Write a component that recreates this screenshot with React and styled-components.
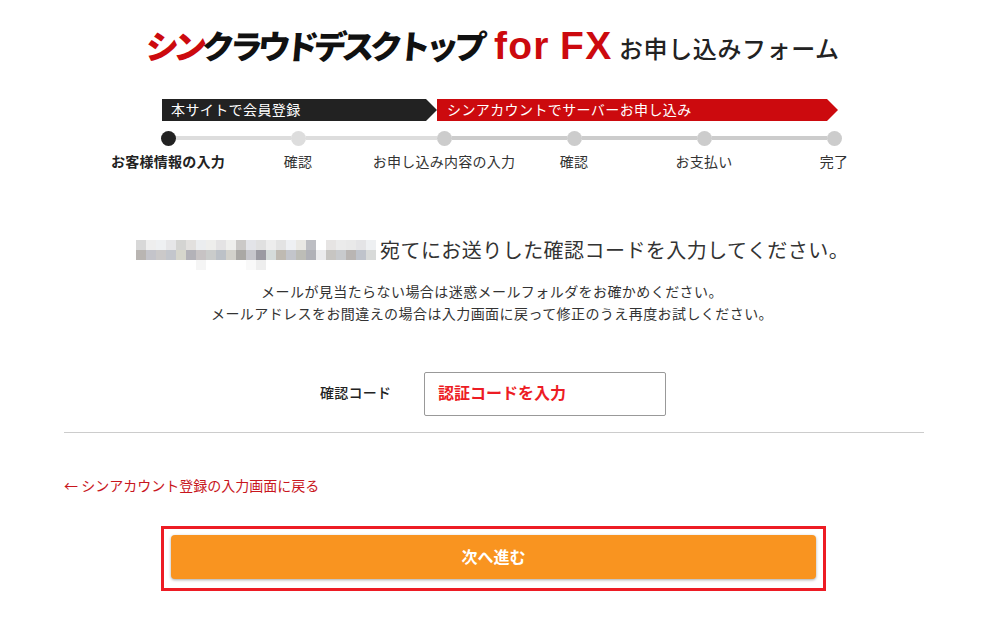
import React from "react";
import styled, { createGlobalStyle } from "styled-components";

const GlobalStyle = createGlobalStyle`
	html, body {
		margin: 0;
		padding: 0;
		background: #fff;
	}
	body {
		font-family: "Noto Sans CJK JP", "Noto Sans", sans-serif;
		color: #333;
		font-size: 14px;
		letter-spacing: 0.25px;
	}
`;

const Page = styled.div`
	width: 860px;
	margin-left: 64px;
	height: 622px;
	overflow: hidden;
`;

const Logo = styled.h1`
	display: flex;
	align-items: center;
	height: 40px;
	margin: 25px 0 0 82px;
	font-weight: 400;
	white-space: nowrap;
	letter-spacing: 0;
`;

const LogoName = styled.span`
	font-size: 33px;
	font-weight: 900;
	letter-spacing: -5px;
	color: #111;
	transform: skewX(-5deg);
	width: 348px;
	line-height: 40px;
`;

const LogoRed = styled.span`
	color: #cc0a0e;
`;

const LogoFx = styled.span`
	font-family: "Liberation Sans", Arial, sans-serif;
	font-size: 39px;
	font-weight: 700;
	letter-spacing: 1.2px;
	word-spacing: -1.5px;
	color: #cc0a0e;
	width: 126px;
	line-height: 40px;
	margin-top: 2px;
`;

const LogoSub = styled.span`
	font-size: 24px;
	font-weight: 500;
	letter-spacing: 0.6px;
	color: #222;
	line-height: 40px;
	margin: 5px 0 0 -1px;
`;

const Banners = styled.div`
	display: flex;
	margin: 34px 0 0 98px;
`;

const Banner = styled.div`
	box-sizing: border-box;
	width: ${(p) => p.$width}px;
	height: 22px;
	padding-left: ${(p) => p.$inset}px;
	background: ${(p) => p.$color};
	color: #fff;
	font-size: 14px;
	letter-spacing: 0.4px;
	line-height: 20px;
	clip-path: polygon(0 0, calc(100% - 11px) 0, 100% 50%, calc(100% - 11px) 100%, 0 100%);
`;

const Track = styled.div`
	display: flex;
	margin: 9.5px 0 0 96.5px;
`;

const Step = styled.div`
	display: flex;
	flex-direction: column;
	align-items: center;
	width: 15px;
`;

const Dot = styled.span`
	width: 15px;
	height: 15px;
	border-radius: 50%;
	background: ${(p) => p.$color};
`;

const StepLabel = styled.span`
	margin-top: 5px;
	line-height: 20px;
	white-space: nowrap;
	font-weight: ${(p) => (p.$active ? 700 : 400)};
	color: ${(p) => (p.$active ? "#222" : "#333")};
`;

const Connector = styled.span`
	width: ${(p) => p.$width}px;
	height: 4px;
	margin-top: 5.5px;
	background: ${(p) => p.$color};
`;

const Heading = styled.div`
	display: flex;
	align-items: flex-start;
	margin: 69.5px 0 0 72px;
	height: 30px;
	font-size: 20px;
	line-height: 20px;
	letter-spacing: 0.45px;
	color: #333;
	white-space: nowrap;
`;

const Mosaic = styled.svg`
	display: block;
	width: 241px;
	height: 30px;
	margin-right: 3px;
	flex: none;
`;

const Notes = styled.p`
	margin: 10px 0 0;
	width: 856px;
	text-align: center;
	line-height: 22px;
	letter-spacing: 0.43px;
	color: #333;
`;

const FormRow = styled.div`
	display: flex;
	align-items: center;
	margin: 48px 0 0 256px;
`;

const FieldLabel = styled.label`
	width: 104px;
	padding-bottom: 5px;
	font-weight: 500;
	color: #222;
`;

const CodeInput = styled.input`
	box-sizing: border-box;
	width: 242px;
	height: 44px;
	padding: 0 13px 5px;
	border: 1px solid #999;
	border-radius: 2px;
	outline: none;
	font-family: inherit;
	font-size: 16px;
	font-weight: 700;
	letter-spacing: 0;

	&::placeholder {
		color: #ed1c24;
		opacity: 1;
	}
`;

const Divider = styled.hr`
	margin: 16px 0 0;
	border: 0;
	border-top: 1px solid #ccc;
`;

const BackLink = styled.a`
	display: block;
	margin-top: 42px;
	line-height: 20px;
	letter-spacing: 0;
	color: #c8161d;
	text-decoration: none;
`;

const SubmitFrame = styled.div`
	box-sizing: border-box;
	width: 665px;
	height: 65px;
	margin: 31px 0 0 97px;
	padding: 6px 7px;
	border: 3px solid #ed1c24;
`;

const SubmitButton = styled.button`
	display: block;
	width: 645px;
	height: 44px;
	padding: 0 0 2px;
	border: 0;
	border-radius: 4px;
	background: #f99420;
	box-shadow: 0 1px 3px rgba(0, 0, 0, 0.35);
	color: #fff;
	font-family: inherit;
	font-size: 16px;
	font-weight: 700;
	letter-spacing: 0;
`;

const mosaicRows = [
	["d8d8d8", "eeeeee", "eef0f2", "e6e6e8", "d4d4d2", "e2e0de", "ebedef", "eeeeec", "e4e3e4", "efefed", "cbc9c7", "e3e4e8", "e0e0e0", "ededed", "e3e3e3", "eef0f3", "e9e8e4", "bdbec3", "ffffff", "e6e4e3", "ebebeb", "e9e9e9", "e4e4e6", "eef0f2"],
	["b9b5b2", "c4c4ca", "cbc9c9", "c3c6cc", "d6d6cc", "b3b2b8", "c7c3c4", "cacccb", "bcc1c7", "d2d1cb", "aaa8a5", "c6c6cc", "9b9aa2", "d5dbda", "bfbab2", "c3c5cb", "bdbdb7", "b0b1b7", "ebebed", "c7c5c2", "c8cacd", "b9b5b3", "bfc3cb", "d8dad9"],
	["ffffff", "ffffff", "ffffff", "ffffff", "ffffff", "ffffff", "f5f5f5", "ffffff", "ffffff", "ffffff", "ffffff", "f9f9f9", "eeeeee"],
];

const steps = [
	{ label: "お客様情報の入力", dot: "#222", line: 115, lineColor: "#ddd", active: true },
	{ label: "確認", dot: "#ddd", line: 131, lineColor: "#ddd" },
	{ label: "お申し込み内容の入力", dot: "#ccc", line: 115, lineColor: "#ccc" },
	{ label: "確認", dot: "#ccc", line: 115, lineColor: "#ccc" },
	{ label: "お支払い", dot: "#ccc", line: 115, lineColor: "#ccc" },
	{ label: "完了", dot: "#ccc" },
];

const App = () => {
	return (
		<>
			<GlobalStyle />
			<Page>
				<Logo>
					<LogoName>
						<LogoRed>シン</LogoRed>クラウドデスクトップ
					</LogoName>
					<LogoFx>for FX</LogoFx>
					<LogoSub>お申し込みフォーム</LogoSub>
				</Logo>

				<Banners>
					<Banner $width={275} $inset={9} $color="#222">本サイトで会員登録</Banner>
					<Banner $width={401} $inset={10} $color="#cc0a0e">シンアカウントでサーバーお申し込み</Banner>
				</Banners>

				<Track>
					{steps.map((step, i) => (
						<React.Fragment key={i}>
							<Step>
								<Dot $color={step.dot} />
								<StepLabel $active={step.active}>{step.label}</StepLabel>
							</Step>
							{step.line ? <Connector $width={step.line} $color={step.lineColor} /> : null}
						</React.Fragment>
					))}
				</Track>

				<Heading>
					<Mosaic viewBox="0 0 241 30" aria-hidden="true">
						{mosaicRows.map((row, y) =>
							row.map((color, x) => (
								<rect key={`${x}-${y}`} x={x * 10} y={y * 10} width="10" height="10" fill={`#${color}`} />
							))
						)}
					</Mosaic>
					宛てにお送りした確認コードを入力してください。
				</Heading>

				<Notes>
					メールが見当たらない場合は迷惑メールフォルダをお確かめください。
					<br />
					メールアドレスをお間違えの場合は入力画面に戻って修正のうえ再度お試しください。
				</Notes>

				<FormRow>
					<FieldLabel htmlFor="code">確認コード</FieldLabel>
					<CodeInput id="code" placeholder="認証コードを入力" />
				</FormRow>

				<Divider />

				<BackLink href="#">← シンアカウント登録の入力画面に戻る</BackLink>

				<SubmitFrame>
					<SubmitButton type="button">次へ進む</SubmitButton>
				</SubmitFrame>
			</Page>
		</>
	);
};

export default App;
